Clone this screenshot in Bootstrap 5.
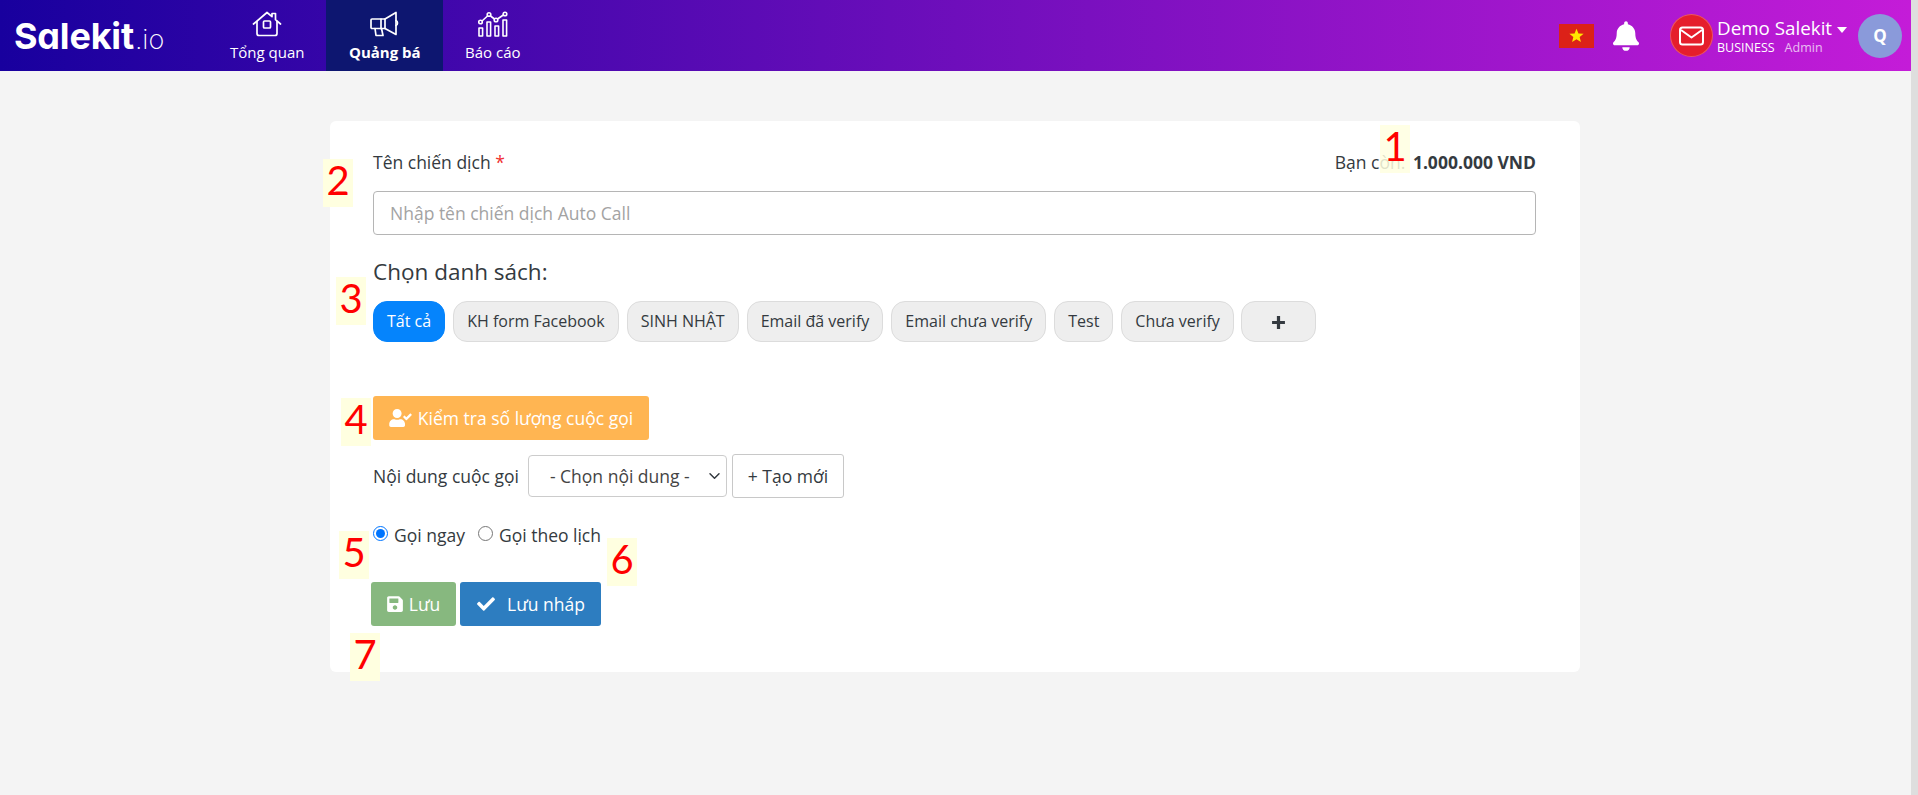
<!DOCTYPE html>
<html lang="vi">
<head>
<meta charset="utf-8">
<title>Salekit</title>
<link href="https://cdn.jsdelivr.net/npm/bootstrap@5.3.0/dist/css/bootstrap.min.css" rel="stylesheet">
<style>
html,body{height:100%;}
body{background:#f4f4f4;font-family:"Open Sans","Noto Sans",sans-serif;font-size:17.5px;color:#343a40;overflow:hidden;}
.page-main{position:relative;width:1911px;min-height:795px;}
.side-strip{width:7px;background:#dedede;}
.top-bar{height:71px;background:linear-gradient(90deg,#18009e 0%,#c41cd8 100%);color:#fff;padding:0;}
.brand-mark{width:208px;padding-left:14px;font-family:Inter,"Open Sans",sans-serif;font-feature-settings:"cv11" 1;color:#fff;font-size:36px;line-height:1;font-weight:700;letter-spacing:-.2px;text-decoration:none;}
.brand-mark span{font-weight:200;font-size:27px;letter-spacing:0;margin-left:1px;}
.nav-cell{height:71px;padding:11px 22px 0;color:#fff;font-size:15px;line-height:20px;text-decoration:none;text-align:center;}
.nav-cell svg{display:block;margin:0 auto 5px;}
.nav-cell.is-on{background:#0d1670;font-weight:700;padding:11px 22.5px 0;}
.flag-box{width:35px;height:24px;background:#dc2118;}
.bell-box{margin-left:19px;margin-right:31px;}
.mail-dot{width:43px;height:43px;border-radius:50%;background:#e51e2c;box-shadow:0 0 0 1px rgba(255,255,255,.25) inset;}
.who-box{margin-left:4px;width:141px;line-height:1;}
.who-name{font-size:18.800px;line-height:24px;white-space:nowrap;}
.who-sub{font-size:12.500px;line-height:16px;white-space:nowrap;}
.who-role{margin-left:10px;opacity:.7;}
.caret-down{display:inline-block;margin-left:5px;vertical-align:2px;border-left:5.500px solid transparent;border-right:5.500px solid transparent;border-top:6px solid #fff;}
.face-dot{width:44px;height:44px;border-radius:50%;background:#8a9ada;font-weight:700;font-size:17px;margin-right:9px;margin-left:0;}
.form-sheet{width:1250px;height:551px;margin:50px 0 0 330px;background:#fff;border-radius:6px;padding:30px 44px 0 43px;}
.label-row{line-height:22px;margin-bottom:18px;}
.balance-num{margin-left:3px;}
.req-star{color:#f03030;}
.name-input{height:44px;border:1px solid #b5b5b5;border-radius:4px;padding:0 16px;font-size:17.500px;color:#343a40;}
.name-input::placeholder{color:#a3a3a3;}
.list-title{font-size:22.500px;line-height:28px;font-weight:400;margin:23px 0 15px;}
.chip-row{gap:8px;}
.chip-btn{height:41px;padding:0 13px;font-size:16px;line-height:39px;border:1px solid #dcdcdc;background:#eee;color:#343a40;border-radius:14px;white-space:nowrap;}
.chip-btn.is-on{background:#0584fc;border-color:#0584fc;color:#fff;}
.chip-add{width:75px;padding:0;margin-left:-1px;}
.check-btn{height:44px;width:276px;margin-top:54px;background:#ffb552;border:0;border-radius:3px;color:#fff;font-size:17.500px;padding:0;gap:6px;}
.content-row{margin-top:14px;height:44px;}
.content-label{margin-right:9px;}
.content-select{width:199px;height:42px;font-size:17.500px;color:#444;border:1px solid #ccc;padding:0 24px 0 21px;border-radius:4px;background-position:right 4px center;background-size:15px 12px;}
.new-btn{width:112px;height:44px;margin-left:5px;border:1px solid #c8c8c8;border-radius:3px;font-size:17.500px;color:#343a40;background:#fff;padding:0;}
.radio-row{margin-top:26px;line-height:22px;height:22px;font-size:17.500px;}
.radio-item{display:inline-flex;align-items:center;margin-right:13px;}
.radio-item input{width:15px;height:15px;margin:0 6px 3px 0;}
.save-row{margin-top:36px;margin-left:-2px;gap:4px;}
.save-btn{height:44px;border:0;border-radius:3px;color:#fff;font-size:17.500px;padding:0;}
.save-green{width:85px;background:#87b87f;gap:6px;}
.save-blue{width:141px;background:#2d7dc0;gap:11px;}
.mark-tag{position:absolute;width:30px;height:48px;background:#ffffe0;color:#f00;font-size:40px;line-height:42px;text-align:center;font-family:Lato,"Open Sans",sans-serif;}
.tag-a{left:1380px;top:125px;background:rgba(255,255,224,.85);}
.tag-b{left:323px;top:159px;}
.tag-c{left:336px;top:277px;}
.tag-d{left:341px;top:398px;}
.tag-e{left:339px;top:531px;}
.tag-f{left:607px;top:538px;}
.tag-g{left:350px;top:633px;}
</style>
</head>
<body>
<div class="d-flex">
<div class="page-main">
  <nav class="top-bar d-flex align-items-center">
    <a class="brand-mark" href="#">Salekit<span>.io</span></a>
    <a class="nav-cell" href="#">
      <svg width="30" height="26" viewBox="0 0 30 26" fill="none" stroke="#fff" stroke-width="1.700" stroke-linejoin="round" stroke-linecap="round"><path d="M1.500 13 15 1.500l5 4.200V2.500h3.500v6.200L28.500 13"/><path d="M5 10.500V22.500a2 2 0 0 0 2 2h16a2 2 0 0 0 2-2V10.500"/><rect x="11.500" y="10" width="7" height="7" rx="1"/></svg>
      Tổng quan
    </a>
    <a class="nav-cell is-on" href="#">
      <svg width="30" height="26" viewBox="0 0 30 26" fill="none" stroke="#fff" stroke-width="1.700" stroke-linejoin="round" stroke-linecap="round"><path d="M2 8h13v9.500H2a1 1 0 0 1-1-1V9a1 1 0 0 1 1-1z"/><path d="M15 8 26 1.500v22L15 17.500"/><path d="M11 8v9.500"/><path d="M26 9.500c2 .6 2 4.400 0 5"/><path d="M5 17.500l1 7h7l-1.500-7"/></svg>
      Quảng bá
    </a>
    <a class="nav-cell" href="#">
      <svg width="30" height="26" viewBox="0 0 30 26" fill="none" stroke="#fff" stroke-width="1.600" stroke-linejoin="round"><circle cx="2.500" cy="11" r="1.800"/><circle cx="11" cy="3.500" r="1.800"/><circle cx="18" cy="9" r="1.800"/><circle cx="27" cy="3" r="1.800"/><path d="M4 10 9.500 5M12.500 5 16.500 8M19.500 8 25.300 4"/><rect x="1" y="17" width="3.600" height="8"/><rect x="9" y="11" width="3.600" height="14"/><rect x="17" y="15" width="3.600" height="10"/><rect x="25" y="9" width="3.600" height="16"/></svg>
      Báo cáo
    </a>
    <div class="d-flex align-items-center ms-auto">
      <div class="flag-box d-flex align-items-center justify-content-center">
        <svg width="15" height="15" viewBox="0 0 20 20"><path fill="#ffe600" d="M10 1l2.600 6.200 6.900.5-5.300 4.400 1.700 6.600L10 15.100 4.100 18.700l1.700-6.600L.5 7.700l6.900-.5z"/></svg>
      </div>
      <div class="bell-box d-flex">
        <svg width="26" height="30" viewBox="0 0 448 512"><path fill="#fff" d="M224 512c35.320 0 63.970-28.650 63.970-64H160.030c0 35.350 28.650 64 63.970 64zm215.390-149.710c-19.320-20.760-55.470-51.990-55.470-154.290 0-77.700-54.480-139.900-127.940-155.160V32c0-17.670-14.320-32-31.980-32s-31.980 14.330-31.980 32v20.840C118.560 68.100 64.080 130.300 64.080 208c0 102.300-36.150 133.530-55.470 154.290-6 6.450-8.660 14.160-8.610 21.710.11 16.400 12.980 32 32.100 32h383.800c19.120 0 32-15.600 32.100-32 .05-7.550-2.610-15.270-8.610-21.710z"/></svg>
      </div>
      <div class="mail-dot d-flex align-items-center justify-content-center">
        <svg width="25" height="20" viewBox="0 0 25 20" fill="none" stroke="#fff" stroke-width="2" stroke-linejoin="round"><rect x="1" y="1.500" width="23" height="17" rx="2.500"/><path d="M2 4l10.500 7.500L23 4"/></svg>
      </div>
      <div class="who-box">
        <div class="who-name">Demo Salekit<span class="caret-down"></span></div>
        <div class="who-sub">BUSINESS<span class="who-role">Admin</span></div>
      </div>
      <div class="face-dot d-flex align-items-center justify-content-center">Q</div>
    </div>
  </nav>

  <form class="form-sheet">
    <div class="label-row d-flex justify-content-between">
      <span>Tên chiến dịch <span class="req-star">*</span></span>
      <span>Bạn còn: <b class="balance-num">1.000.000 VND</b></span>
    </div>
    <input class="form-control name-input" type="text" placeholder="Nhập tên chiến dịch Auto Call">
    <h5 class="list-title">Chọn danh sách:</h5>
    <div class="chip-row d-flex">
      <button type="button" class="btn chip-btn is-on">Tất cả</button>
      <button type="button" class="btn chip-btn">KH form Facebook</button>
      <button type="button" class="btn chip-btn">SINH NHẬT</button>
      <button type="button" class="btn chip-btn">Email đã verify</button>
      <button type="button" class="btn chip-btn">Email chưa verify</button>
      <button type="button" class="btn chip-btn">Test</button>
      <button type="button" class="btn chip-btn">Chưa verify</button>
      <button type="button" class="btn chip-btn chip-add"><svg width="15" height="15" viewBox="0 0 14 14"><path fill="#343a40" d="M5.500 1h3v4.500H13v3H8.500V13h-3V8.500H1v-3h4.500z"/></svg></button>
    </div>
    <button type="button" class="btn check-btn d-flex align-items-center justify-content-center">
      <svg width="23" height="18" viewBox="0 0 640 512"><path fill="#fff" d="M224 256c70.700 0 128-57.300 128-128S294.700 0 224 0 96 57.300 96 128s57.300 128 128 128zm89.600 32h-16.700c-22.200 10.200-46.900 16-72.900 16s-50.600-5.800-72.900-16h-16.700C60.200 288 0 348.200 0 422.400V464c0 26.500 21.500 48 48 48h352c26.500 0 48-21.500 48-48v-41.600c0-74.200-60.200-134.400-134.400-134.400zm323-128.400l-27.800-28.100c-4.600-4.700-12.100-4.700-16.800-.1l-104.800 104-45.500-45.800c-4.600-4.700-12.100-4.700-16.800-.1l-28.100 27.900c-4.700 4.600-4.700 12.100-.1 16.800l81.700 82.300c4.600 4.700 12.100 4.700 16.800.1l141.300-140.200c4.600-4.700 4.700-12.200.1-16.800z"/></svg>
      Kiểm tra số lượng cuộc gọi
    </button>
    <div class="content-row d-flex align-items-center">
      <span class="content-label">Nội dung cuộc gọi</span>
      <select class="form-select content-select"><option>- Chọn nội dung -</option></select>
      <button type="button" class="btn new-btn">+ Tạo mới</button>
    </div>
    <div class="radio-row d-flex">
      <label class="radio-item"><input type="radio" name="when" checked>Gọi ngay</label>
      <label class="radio-item"><input type="radio" name="when">Gọi theo lịch</label>
    </div>
    <div class="save-row d-flex">
      <button type="button" class="btn save-btn save-green d-flex align-items-center justify-content-center">
        <svg width="16" height="18" viewBox="0 0 448 512"><path fill="#fff" d="M433.941 129.941l-83.882-83.882A48 48 0 0 0 316.118 32H48C21.490 32 0 53.490 0 80v352c0 26.510 21.490 48 48 48h352c26.510 0 48-21.490 48-48V163.882a48 48 0 0 0-14.059-33.941zM224 416c-35.346 0-64-28.654-64-64 0-35.346 28.654-64 64-64s64 28.654 64 64c0 35.346-28.654 64-64 64zm96-304.520V212c0 6.627-5.373 12-12 12H76c-6.627 0-12-5.373-12-12V108c0-6.627 5.373-12 12-12h228.520c3.183 0 6.235 1.264 8.485 3.515l3.480 3.480A11.996 11.996 0 0 1 320 111.480z"/></svg>
        Lưu
      </button>
      <button type="button" class="btn save-btn save-blue d-flex align-items-center justify-content-center">
        <svg width="20" height="18" viewBox="0 0 512 512"><path fill="#fff" d="M173.898 439.404l-166.400-166.400c-9.997-9.997-9.997-26.206 0-36.204l36.203-36.204c9.997-9.998 26.207-9.998 36.204 0L192 312.690 432.095 72.596c9.997-9.997 26.207-9.997 36.204 0l36.203 36.204c9.997 9.997 9.997 26.206 0 36.204l-294.400 294.401c-9.998 9.997-26.207 9.997-36.204-.001z"/></svg>
        Lưu nháp
      </button>
    </div>
  </form>

  <div class="mark-tag tag-a">1</div>
  <div class="mark-tag tag-b">2</div>
  <div class="mark-tag tag-c">3</div>
  <div class="mark-tag tag-d">4</div>
  <div class="mark-tag tag-e">5</div>
  <div class="mark-tag tag-f">6</div>
  <div class="mark-tag tag-g">7</div>
</div>
<div class="side-strip"></div>
</div>
<script src="https://cdn.jsdelivr.net/npm/bootstrap@5.3.0/dist/js/bootstrap.bundle.min.js"></script>
</body>
</html>
